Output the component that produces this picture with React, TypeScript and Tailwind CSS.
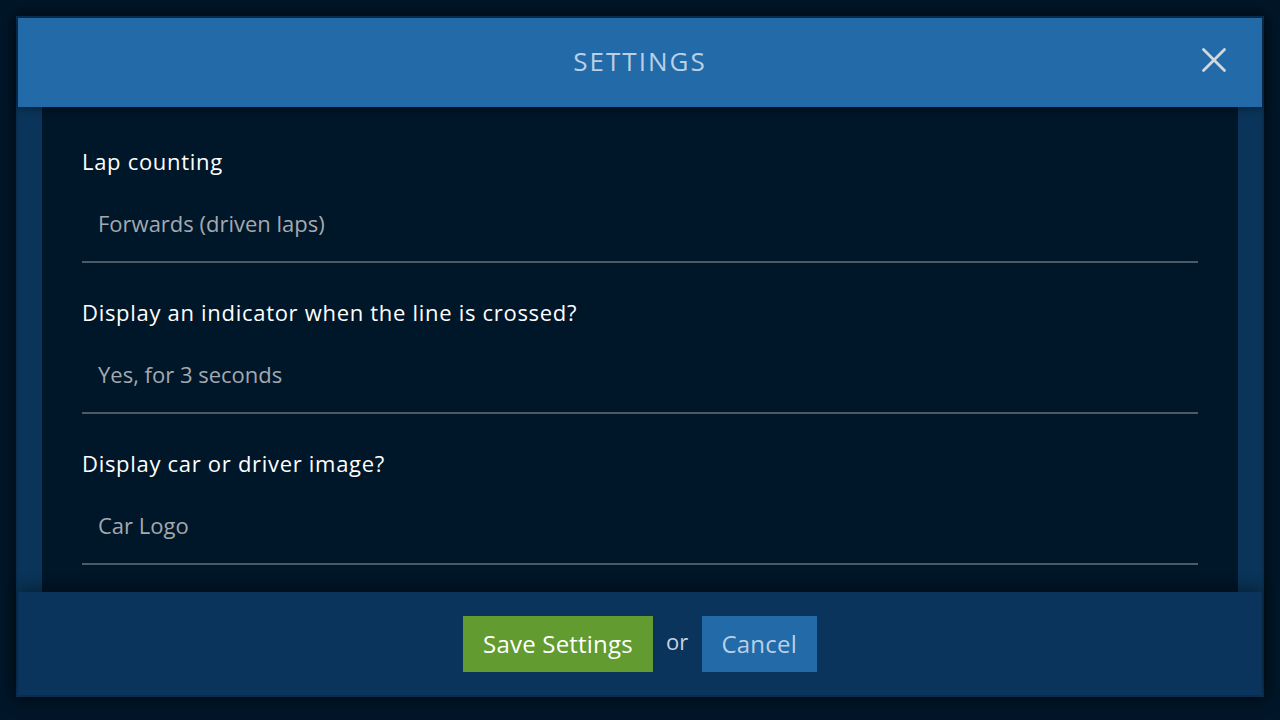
import { X } from "lucide-react";

const rows = [
  { label: "Lap counting", value: "Forwards (driven laps)" },
  { label: "Display an indicator when the line is crossed?", value: "Yes, for 3 seconds" },
  { label: "Display car or driver image?", value: "Car Logo" },
];

const App = () => {
  return (
    <div
      className="w-[1280px] h-[720px] bg-[#011628] p-4 overflow-hidden"
      style={{ fontFamily: '"Open Sans", "Noto Sans", sans-serif' }}
    >
      <div className="flex h-[681px] flex-col border-2 border-[#0b2e4f] shadow-[0_0_16px_rgba(0,0,0,0.6)]">
        {/* header */}
        <header className="relative z-10 flex h-[89px] shrink-0 items-center justify-center bg-[#226aa8] pb-[2px] shadow-[0_2px_8px_rgba(0,0,0,0.35)]">
          <h1 className="text-[26px] tracking-[2px] text-[#b9d0e6]">SETTINGS</h1>
          <button className="absolute right-[27px] top-[21px] text-[#d4d8dc]">
            <X size={42} strokeWidth={1.6} />
          </button>
        </header>

        {/* body */}
        <div className="flex min-h-0 flex-1 bg-[#0a3459] px-6">
          <div className="flex-1 overflow-hidden bg-[#001629] px-10 pt-[40px]">
            {rows.map((r) => (
              <div key={r.label} className="mb-[35px]">
                <div className="text-[22px] leading-[28px] tracking-[0.7px] text-white">{r.label}</div>
                <div className="border-b-2 border-[#4b5a67] pl-4 pt-[34px] pb-[24px] text-[22px] leading-[28px] text-[#a3a9ae]">
                  {r.value}
                </div>
              </div>
            ))}
          </div>
        </div>

        {/* footer */}
        <footer className="relative z-10 flex h-[103px] shrink-0 items-start justify-center bg-[#0a345c] pt-6 tracking-[0.2px] shadow-[0_-6px_12px_rgba(0,0,0,0.3)]">
          <button className="h-14 bg-[#629b2f] px-5 text-[24px] text-white">Save Settings</button>
          <span className="mx-[13px] mt-[9px] text-[22px] text-[#c6d4e0]">or</span>
          <button className="h-14 bg-[#226aa8] px-5 text-[24px] text-[#b9d0e6]">Cancel</button>
        </footer>
      </div>
    </div>
  );
};

export default App;
